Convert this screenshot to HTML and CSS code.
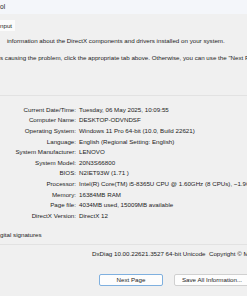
FILE: index.html
```html
<!DOCTYPE html>
<html lang="en">

<head>
    <meta charset="UTF-8">
    <meta name="viewport" content="width=device-width, initial-scale=1.0">
    <title>DirectX Diagnostic Tool</title>
    <link rel="stylesheet" href="styles.css">
</head>

<body>
    <div class="window">
        <!-- Title bar (cut off on the left) -->
        <div class="titlebar">ol</div>

        <!-- Tab strip -->
        <div class="tabs">
            <span class="tab active">nput</span>
        </div>

        <div class="page">
            <p class="intro first">information about the DirectX components and drivers installed on your system.</p>
            <p class="intro second">s causing the problem, click the appropriate tab above. Otherwise, you can use the "Next Page" button below to visit each page in sequence.</p>

            <!-- System information group -->
            <div class="group">
                <div class="info-grid">
                    <span class="label">Current Date/Time:</span><span class="value">Tuesday, 06 May 2025, 10:09:55</span>
                    <span class="label">Computer Name:</span><span class="value">DESKTOP-ODVNDSF</span>
                    <span class="label">Operating System:</span><span class="value">Windows 11 Pro 64-bit (10.0, Build 22621)</span>
                    <span class="label">Language:</span><span class="value">English (Regional Setting: English)</span>
                    <span class="label">System Manufacturer:</span><span class="value">LENOVO</span>
                    <span class="label">System Model:</span><span class="value">20N3S66800</span>
                    <span class="label">BIOS:</span><span class="value">N2IET93W (1.71 )</span>
                    <span class="label">Processor:</span><span class="value">Intel(R) Core(TM) i5-8365U CPU @ 1.60GHz (8 CPUs), ~1.9GHz</span>
                    <span class="label">Memory:</span><span class="value">16384MB RAM</span>
                    <span class="label">Page file:</span><span class="value">4034MB used, 15009MB available</span>
                    <span class="label">DirectX Version:</span><span class="value">DirectX 12</span>
                </div>
            </div>

            <p class="check">gital signatures</p>

            <div class="version-row">
                <span class="version">DxDiag 10.00.22621.3527 64-bit Unicode&nbsp; Copyright © Microsoft. All rights reserved.</span>
            </div>
        </div>

        <!-- Bottom buttons -->
        <div class="buttons">
            <button class="btn primary">Next Page</button>
            <button class="btn">Save All Information...</button>
        </div>
    </div>
</body>

</html>
```

FILE: styles.css
```css
/* General Styles */
body {
    margin: 0;
    padding: 0;
    background-color: #f0f0f0;
    font-family: 'Liberation Sans', Arial, sans-serif;
    font-size: 6.2px;
    color: #1c1c1c;
    overflow: hidden;
}

.window {
    width: 247px;
    height: 296px;
    overflow: hidden;
    white-space: nowrap;
}

p {
    margin: 0;
}

/* Title bar */
.titlebar {
    height: 14px;
    line-height: 14px;
    background-color: #f4f6fa;
    font-size: 6.6px;
    padding-top: 0;
}

/* Tabs */
.tabs {
    height: 17px;
    padding-top: 6px;
    box-sizing: border-box;
    display: flex;
}

.tab {
    height: 11px;
    line-height: 11px;
    padding-right: 3px;
}

.tab.active {
    background-color: #fbfbfb;
}

/* Page body */
.page {
    overflow: hidden;
}

.intro {
    height: 10px;
    line-height: 10px;
    overflow: hidden;
}

.intro.first {
    margin-top: 5px;
    padding-left: 7px;
}

.intro.second {
    margin-top: 7px;
}

.group {
    margin-top: 32px;
    border-top: 1px solid #e2e2e2;
    padding-top: 8px;
}

.info-grid {
    display: grid;
    grid-template-columns: 78px 1fr;
    grid-auto-rows: 10.6px;
    align-items: center;
}

.label {
    text-align: right;
    padding-right: 2px;
}

.value {
    padding-left: 1px;
    overflow: hidden;
}

.check {
    margin-top: 9px;
    height: 10px;
    line-height: 10px;
}

.version-row {
    margin-top: 4px;
    border-top: 1px solid #e2e2e2;
    padding-top: 4px;
    padding-left: 92px;
    height: 10px;
    line-height: 10px;
    overflow: hidden;
}

/* Buttons */
.buttons {
    display: flex;
    gap: 11px;
    margin-top: 15px;
    padding-left: 99px;
}

.btn {
    height: 12px;
    padding: 0;
    font-family: 'Liberation Sans', Arial, sans-serif;
    font-size: 6.2px;
    color: #1c1c1c;
    background-color: #fdfdfd;
    border: 1px solid #d0d0d0;
    border-radius: 2px;
    flex-shrink: 0;
}

.btn.primary {
    width: 64px;
    border-color: #7fb0df;
}

.btn:not(.primary) {
    width: 76px;
}
```
